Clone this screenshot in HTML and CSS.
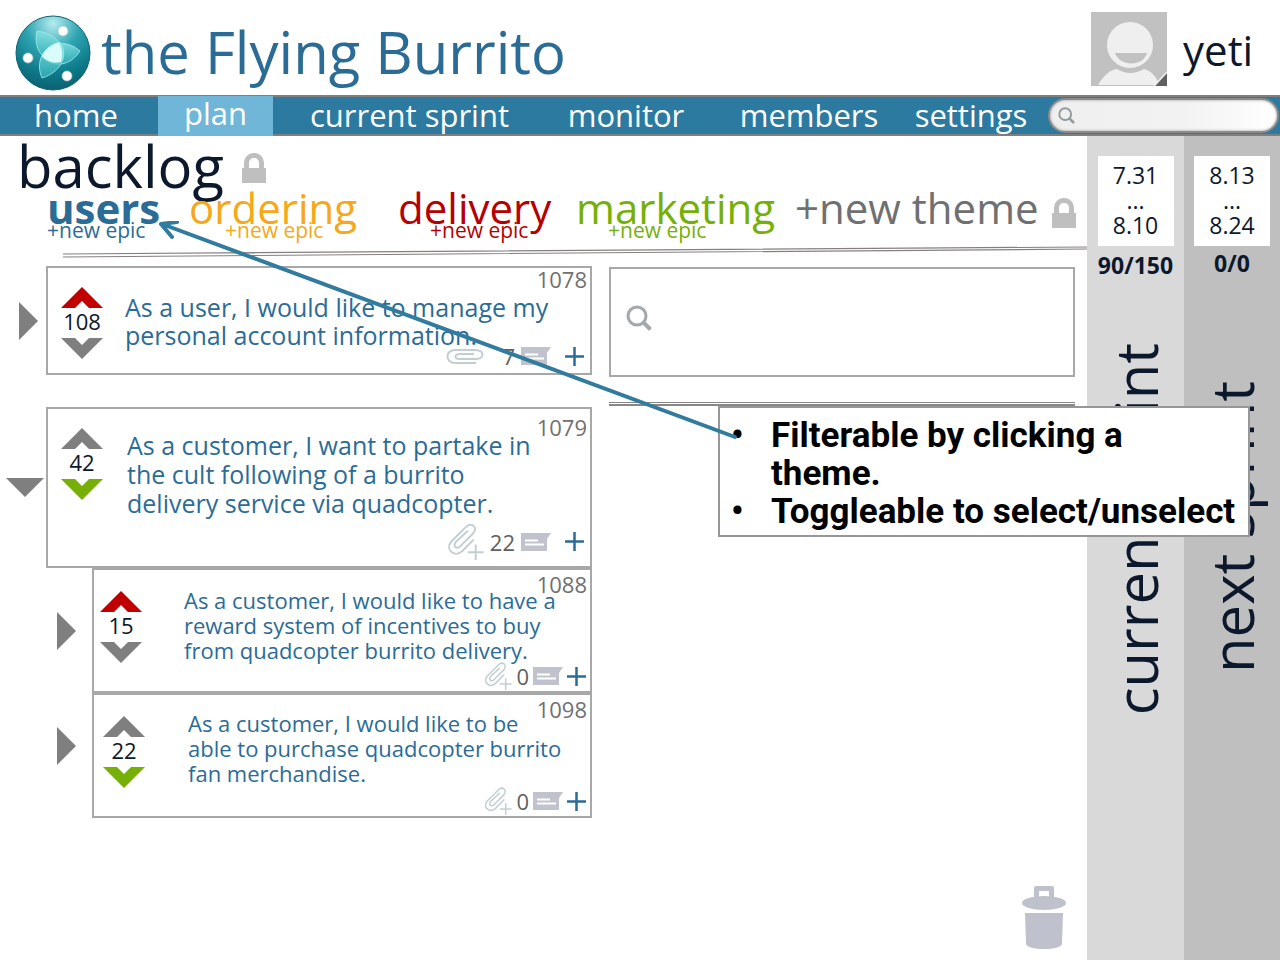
FILE: index.html
```html
<!DOCTYPE html>
<html lang="en">
<head>
<meta charset="utf-8">
<meta name="viewport" content="width=device-width, initial-scale=1">
<title>the Flying Burrito – backlog</title>
<link rel="stylesheet" href="styles.css">
</head>
<body>
<svg class="defs" aria-hidden="true">
  <symbol id="up" viewBox="0 0 42 21"><path d="M21 0L42 21H28L21 14L14 21H0Z"/></symbol>
  <symbol id="down" viewBox="0 0 42 21"><path d="M0 0H14L21 7L28 0H42L21 21Z"/></symbol>
  <symbol id="right" viewBox="0 0 19 38"><path d="M0 0L19 19L0 38Z"/></symbol>
  <symbol id="open" viewBox="0 0 38 19"><path d="M0 0H38L19 19Z"/></symbol>
  <symbol id="lock" viewBox="0 0 24 30"><path d="M2 15V11C2 4 6 0 12 0S22 4 22 11V15H24V30H0V15ZM7 15H17V10C17 7 15 5 12 5S7 7 7 10Z" fill-rule="evenodd"/></symbol>
  <symbol id="clip" viewBox="0 0 38 17"><path d="M30 15H9C-1 15-1 2 9 2H29C39 2 39 11 29 11H14C8 11 8 6 14 6H28" fill="none" stroke="#c3ced3" stroke-width="2"/></symbol>
  <symbol id="clipadd" viewBox="0 0 37 38"><path d="M27 17L15 29C7 36-3 27 4 19L19 4C25-2 32 5 26 11L13 24C9 28 5 23 9 19L21 8" fill="none" stroke="#c3ced3" stroke-width="2"/><path d="M29 22V38M21 30H37" stroke="#c3ced3" stroke-width="2"/></symbol>
  <symbol id="note" viewBox="0 0 30 18"><path d="M0 0H30L26 6V18H0Z" fill="#c0c3ce"/><path d="M4 7.500H17M4 11.500H23" stroke="#fff" stroke-width="2"/></symbol>
  <symbol id="plus" viewBox="0 0 19 19"><path d="M9.500 0V19M0 9.500H19" stroke="#2b6c96" stroke-width="2.500"/></symbol>
  <symbol id="glass" viewBox="0 0 26 26"><circle cx="11" cy="11" r="9" fill="none" stroke="currentColor" stroke-width="3"/><path d="M17 17L24.500 24.500" stroke="currentColor" stroke-width="4"/></symbol>
</svg>

<header class="top">
  <svg class="logo" viewBox="0 0 76 76" role="img" aria-label="Logo">
    <defs>
      <radialGradient id="orb" cx=".5" cy=".1" r=".9"><stop offset="0" stop-color="#b4ecee"/><stop offset=".4" stop-color="#2fa5b2"/><stop offset=".75" stop-color="#0e7a8a"/><stop offset="1" stop-color="#0b6172"/></radialGradient>
      <linearGradient id="leaf" x1="0" y1="0" x2="0" y2="1"><stop offset="0" stop-color="#8be6e6"/><stop offset="1" stop-color="#35b5bb"/></linearGradient>
    </defs>
    <circle cx="38" cy="38" r="37" fill="url(#orb)" stroke="#0d6473"/>
    <g fill="url(#leaf)" fill-opacity=".75" stroke="#a5eef0" stroke-width=".8">
      <path d="M22 16C40 18 52 31 46 47C28 48 18 34 22 16Z"/>
      <path d="M65 36C56 50 40 54 27 42C32 28 50 23 65 36Z"/>
      <path d="M27 63C20 47 28 31 45 27C54 41 46 57 27 63Z"/>
    </g>
    <path d="M27 41C31 33 37 29 44 28C48 35 48 41 46 47C38 49 31 46 27 41Z" fill="#d9fbfa"/>
    <g fill="#fff" stroke="#a9c6cb" stroke-width=".8"><circle cx="48" cy="16" r="5"/><circle cx="13" cy="43" r="5"/><circle cx="52" cy="61" r="5"/></g>
  </svg>
  <h1 class="brand">the Flying Burrito</h1>
  <svg class="avatar" viewBox="0 0 76 74" role="img" aria-label="Profile picture">
    <path d="M0 0H76V74H0Z" fill="#c1c1c1"/>
    <path d="M7 73C13 63 19 58 26 57Q39 65 53 57C60 59 64 63 69 73Z" fill="#efefef"/>
    <circle cx="39" cy="33" r="24" fill="#efefef" stroke="#c1c1c1" stroke-width="2"/>
    <path d="M24 41H56C52 55 29 55 24 41Z" fill="#c1c1c1"/>
    <path d="M76 61V74H64Z" fill="#606060"/><path d="M76 60L63 74" stroke="#efefef" stroke-width="1.500"/>
  </svg>
  <a class="user" href="#">yeti</a>
</header>

<nav class="nav">
  <a href="#">home</a>
  <a class="active" href="#" aria-current="page">plan</a>
  <a href="#">current sprint</a>
  <a href="#">monitor</a>
  <a href="#">members</a>
  <a href="#">settings</a>
  <label class="search"><svg aria-hidden="true"><use href="#glass"/></svg><input type="search" aria-label="Search"></label>
</nav>

<div class="body">
  <main class="main">
    <div class="heading">
      <h2>backlog</h2>
      <svg class="lock" aria-hidden="true"><use href="#lock"/></svg>
    </div>
    <div class="themes">
      <div class="theme users"><button class="name">users</button><button class="epic">+new epic</button></div>
      <div class="theme ordering"><button class="name">ordering</button><button class="epic">+new epic</button></div>
      <div class="theme delivery"><button class="name">delivery</button><button class="epic">+new epic</button></div>
      <div class="theme marketing"><button class="name">marketing</button><button class="epic">+new epic</button></div>
      <div class="theme add"><button class="name">+new theme</button></div>
      <svg class="lock" aria-hidden="true"><use href="#lock"/></svg>
    </div>
    <svg class="rule" viewBox="0 0 1024 12" preserveAspectRatio="none" aria-hidden="true"><path d="M0 8L1024 1M0 11L1024 3" stroke="#85807f" stroke-width="1.200"/></svg>

    <div class="columns">
      <section class="stories">
        <div class="row">
          <button class="toggle" aria-label="Expand"><svg class="right"><use href="#right"/></svg></button>
          <article class="card first">
            <span class="id">1078</span>
            <div class="vote"><button class="red" aria-label="Vote up"><svg><use href="#up"/></svg></button><span>108</span><button aria-label="Vote down"><svg><use href="#down"/></svg></button></div>
            <p>As a user, I would like to manage my<br>personal account information.</p>
            <div class="actions"><svg class="clip"><use href="#clip"/></svg><span class="count">7</span><svg class="note"><use href="#note"/></svg><button aria-label="Add"><svg class="plus"><use href="#plus"/></svg></button></div>
          </article>
        </div>
        <div class="row">
          <button class="toggle down" aria-label="Collapse"><svg class="open"><use href="#open"/></svg></button>
          <article class="card second">
            <span class="id">1079</span>
            <div class="vote"><button aria-label="Vote up"><svg><use href="#up"/></svg></button><span>42</span><button class="green" aria-label="Vote down"><svg><use href="#down"/></svg></button></div>
            <p>As a customer, I want to partake in<br>the cult following of a burrito<br>delivery service via quadcopter.</p>
            <div class="actions"><svg class="clipadd"><use href="#clipadd"/></svg><span class="count">22</span><svg class="note"><use href="#note"/></svg><button aria-label="Add"><svg class="plus"><use href="#plus"/></svg></button></div>
          </article>
        </div>
        <div class="row child">
          <button class="toggle" aria-label="Expand"><svg class="right"><use href="#right"/></svg></button>
          <article class="card small">
            <span class="id">1088</span>
            <div class="vote"><button class="red" aria-label="Vote up"><svg><use href="#up"/></svg></button><span>15</span><button aria-label="Vote down"><svg><use href="#down"/></svg></button></div>
            <p>As a customer, I would like to have a<br>reward system of incentives to buy<br>from quadcopter burrito delivery.</p>
            <div class="actions"><svg class="clipadd"><use href="#clipadd"/></svg><span class="count">0</span><svg class="note"><use href="#note"/></svg><button aria-label="Add"><svg class="plus"><use href="#plus"/></svg></button></div>
          </article>
        </div>
        <div class="row child last">
          <button class="toggle" aria-label="Expand"><svg class="right"><use href="#right"/></svg></button>
          <article class="card small">
            <span class="id">1098</span>
            <div class="vote"><button aria-label="Vote up"><svg><use href="#up"/></svg></button><span>22</span><button class="green" aria-label="Vote down"><svg><use href="#down"/></svg></button></div>
            <p>As a customer, I would like to be<br>able to purchase quadcopter burrito<br>fan merchandise.</p>
            <div class="actions"><svg class="clipadd"><use href="#clipadd"/></svg><span class="count">0</span><svg class="note"><use href="#note"/></svg><button aria-label="Add"><svg class="plus"><use href="#plus"/></svg></button></div>
          </article>
        </div>
      </section>
      <section class="finder">
        <label class="find"><svg aria-hidden="true"><use href="#glass"/></svg><input type="search" aria-label="Search stories"></label>
        <div class="double"></div>
        <button class="trash" aria-label="Trash"><svg viewBox="0 0 44 64"><path d="M12 12V2Q12 0 14 0H30Q32 0 32 2V12H27V5H17V12Z"/><ellipse cx="22" cy="17" rx="22" ry="7"/><path d="M3 27H41L40 58Q38 63 22 63T4 58Z"/></svg></button>
      </section>
    </div>
  </main>

  <aside class="rail current">
    <div class="dates">7.31<br>...<br>8.10</div>
    <strong>90/150</strong>
    <h3>current sprint</h3>
  </aside>
  <aside class="rail next">
    <div class="dates">8.13<br>...<br>8.24</div>
    <strong>0/0</strong>
    <h3>next sprint</h3>
  </aside>
</div>

<ul class="callout">
  <li>Filterable by clicking a theme.</li>
  <li>Toggleable to select/unselect</li>
</ul>
<svg class="arrow" viewBox="0 0 580 220" aria-hidden="true"><path d="M577 216L4 3M14 16L3 3L19 1" fill="none" stroke="#317b9f" stroke-width="4" stroke-linecap="round" stroke-linejoin="round"/></svg>
</body>
</html>
```

FILE: styles.css
```css
* { box-sizing: border-box; }

body {
  margin: 0;
  position: relative;
  min-height: 100vh;
  display: flex;
  flex-direction: column;
  background: #fff;
  color: #0c182c;
  font-family: "Open Sans", "Noto Sans", sans-serif;
  font-weight: 400;
}

h1, h2, h3, p { margin: 0; font-weight: 400; }
a { color: inherit; text-decoration: none; }
button { border: 0; padding: 0; background: none; color: inherit; font: inherit; cursor: pointer; }
input { border: 0; outline: 0; background: none; font: inherit; min-width: 0; flex: 1; }
svg { display: block; flex: none; }
.defs { position: absolute; width: 0; height: 0; }

.top { display: flex; align-items: center; height: 95px; padding: 0 26px 0 15px; }
.logo { width: 76px; height: 76px; margin-top: 10px; }
.brand { margin-left: 10px; font-size: 58px; line-height: 76px; color: #2b6c96; margin-top: 8px; white-space: nowrap; }
.avatar { width: 76px; height: 74px; margin-left: auto; margin-top: 2px; }
.user { width: 71px; margin-left: 16px; font-size: 42px; line-height: 56px; margin-top: 4px; }

.nav {
  display: grid;
  grid-template-columns: 152fr 121fr 273fr 160fr 206fr 118fr 250fr;
  height: 41px;
  border: 2px solid #7f7f7f;
  border-width: 2px 0;
  background: #2c7aa0;
  color: #fff;
  font-size: 31px;
  line-height: 36px;
  text-align: center;
  white-space: nowrap;
}
.nav > * { min-width: 0; }
.nav .active { background: #6fb6d8; margin: -1px 0 -2px 6px; line-height: 34px; }
.search {
  display: flex;
  align-items: center;
  margin: 1px 1px 1px 18px;
  padding: 0 8px;
  border: 2px solid #8b8b8b;
  border-radius: 18px;
  background: linear-gradient(90deg, #efefef, #f2f2f2 60%, #fff);
  box-shadow: inset 0 0 3px #999;
  color: #929a9e;
}
.search svg { width: 17px; height: 17px; }
.search input { height: 28px; font-size: 20px; }

.body { flex: 1; display: flex; }
.main { flex: 1; min-width: 0; display: flex; flex-direction: column; }

.heading { display: flex; align-items: center; gap: 18px; height: 56px; padding-left: 17px; }
.heading h2 { font-size: 58px; line-height: 64px; margin-top: 4px; }
.lock { width: 24px; height: 30px; fill: #bfbfbf; }
.heading .lock { margin-top: 8px; }

.themes { display: grid; grid-template-columns: 142fr 209fr 178fr 219fr 257fr 35fr; padding-left: 47px; height: 54px; }
.theme { display: flex; flex-direction: column; align-items: flex-start; min-width: 0; white-space: nowrap; }
.theme .name { font-size: 42px; line-height: 32px; }
.theme .epic { margin-left: 32px; font-size: 21px; line-height: 20px; margin-top: -4px; }
.users { color: #2b6c96; }
.users .name { font-weight: 700; }
.theme.users .epic { margin-left: 0; }
.ordering { color: #f5a818; }
.theme.ordering .epic { margin-left: 36px; }
.delivery { color: #b60000; }
.marketing { color: #76b007; }
.add { color: #707070; }
.themes .lock { margin-top: 6px; }
.rule { height: 12px; width: auto; margin-left: 63px; }

.columns { flex: 1; display: grid; grid-template-columns: 592fr 466fr; gap: 17px; padding: 8px 12px 10px 0; }
.row { display: flex; align-items: stretch; }
.row + .row { margin-top: 32px; }
.row + .row.child { margin-top: 0; }
.toggle { width: 46px; padding-left: 19px; fill: #7f7f7f; }
.toggle.down { padding-left: 6px; }
.child .toggle { width: 92px; padding-left: 57px; }
.last .toggle { padding-bottom: 20px; }
.right { width: 19px; height: 38px; }
.open { width: 38px; height: 19px; }

.card { position: relative; flex: 1; min-width: 0; display: flex; border: 2px solid #a8a8a8; background: #fff; color: #2b6c96; }
.first { min-height: 109px; }
.second { min-height: 161px; }
.small { min-height: 125px; }
.card p { margin: 25px 0 0 22px; font-size: 25px; line-height: 28px; white-space: nowrap; }
.card.second p { margin: 22px 0 0 24px; line-height: 29px; }
.card.small p { margin: 18px 0 0 42px; font-size: 22px; line-height: 25px; }
.last .card.small p { margin: 16px 0 0 43px; }
.vote { width: 42px; margin: 19px 0 0 13px; display: flex; flex-direction: column; align-items: center; color: #0c182c; font-size: 22px; line-height: 28px; fill: #7f7f7f; }
.vote span { margin: -1px 0 3px; }
.vote svg { width: 42px; height: 21px; }
.small .vote { margin: 21px 0 0 6px; }
.last .vote { margin-left: 9px; }
.red { fill: #c00000; }
.green { fill: #76b007; }
.id { position: absolute; top: -1px; right: 3px; font-size: 22px; line-height: 24px; color: #707070; }
.second .id { top: 6px; }
.small .id { top: 2px; }
.actions { position: absolute; right: 6px; bottom: 6px; display: flex; align-items: center; gap: 6px; color: #606060; font-size: 22px; line-height: 22px; }
.clip { width: 38px; height: 17px; margin-right: 12px; }
.clipadd { width: 37px; height: 37px; }
.small .clipadd { width: 28px; height: 28px; }
.note { width: 30px; height: 18px; }
.plus { width: 19px; height: 19px; }
.first .plus, .second .plus { margin-left: 8px; }
.small .actions { right: 4px; bottom: 1px; gap: 4px; }

.finder { display: flex; flex-direction: column; padding-top: 1px; }
.find { display: flex; align-items: center; height: 110px; padding: 0 15px 8px; border: 2px solid #a8a8a8; color: #a3a8ac; }
.find svg { width: 26px; height: 26px; }
.find input { margin-left: 12px; font-size: 24px; height: 40px; }
.double { height: 4px; margin-top: 25px; border: 1px solid #888; border-width: 1px 0 2px; }
.trash { margin: auto 9px 0 auto; fill: #bfc2cd; }
.trash svg { width: 44px; height: 64px; }

.rail { width: 97px; display: flex; flex-direction: column; align-items: center; padding-top: 20px; }
.current { background: #d9d9d9; }
.next { width: 96px; background: #bfbfbf; }
.dates { width: 76px; height: 90px; padding-top: 7px; background: #fff; text-align: center; font-size: 23px; line-height: 25px; }
.rail strong { margin-top: 5px; font-size: 23px; line-height: 28px; font-weight: 700; }
.next strong { margin-top: 3px; }
.rail h3 { writing-mode: vertical-rl; transform: rotate(180deg); font-size: 58px; line-height: 88px; white-space: nowrap; margin-top: 64px; }
.next h3 { margin-top: 104px; }

.callout {
  position: absolute;
  left: 718px;
  top: 406px;
  width: 532px;
  margin: 0;
  padding: 9px 0 4px 51px;
  border: 2px solid #979797;
  background: #fff;
  color: #000;
  font-family: Roboto, sans-serif;
  font-size: 35px;
  font-weight: 700;
  line-height: 38px;
  list-style: none;
}
.callout li { position: relative; }
.callout li:first-child { max-width: 400px; }
.callout li::before { content: "•"; position: absolute; left: -40px; }
.arrow { position: absolute; left: 158px; top: 221px; width: 580px; height: 220px; pointer-events: none; }
```
